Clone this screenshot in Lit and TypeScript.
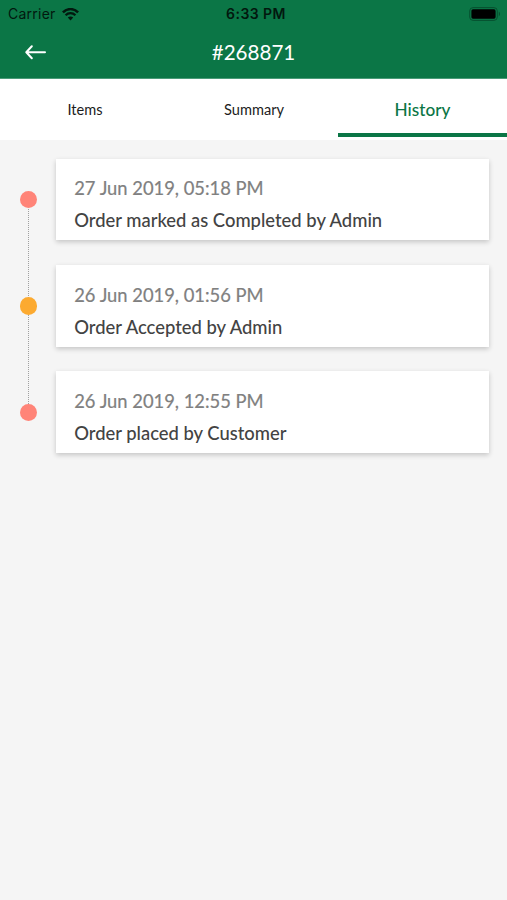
import { LitElement, html, css } from "lit";
import { customElement, property } from "lit/decorators.js";
import { classMap } from "lit/directives/class-map.js";

@customElement("status-bar")
class StatusBar extends LitElement {
  static styles = css`
    :host {
      display: grid;
      grid-template-columns: 1fr auto 1fr;
      align-items: center;
      height: 27px;
      padding: 0 6px 0 8px;
      color: #02180e;
      font-family: Inter, "Liberation Sans", sans-serif;
      font-size: 14px;
      line-height: 28px;
    }
    .left {
      display: flex;
      align-items: center;
      gap: 6px;
    }
    .carrier {
      letter-spacing: 0.25px;
    }
    .time {
      font-weight: 600;
      font-size: 14px;
      letter-spacing: 0.45px;
      padding-left: 3px;
    }
    .battery {
      justify-self: end;
    }
    svg {
      display: block;
    }
  `;
  render() {
    return html`
      <div class="left">
        <span class="carrier">Carrier</span>
        <svg width="17" height="13" viewBox="0 0 17 13" fill="none" stroke="currentColor">
          <path d="M0.9 4.4C5.2 0 11.8 0 16.1 4.4" stroke-width="2.5" />
          <path d="M3.6 7.2C6.4 4.4 10.6 4.4 13.4 7.2" stroke-width="2.3" />
          <path d="M8.5 12.4L5.8 9.5C7.3 8.1 9.7 8.1 11.2 9.5Z" fill="currentColor" stroke="none" />
        </svg>
      </div>
      <div class="time">6:33 PM</div>
      <svg class="battery" width="32" height="14" viewBox="0 0 32 14">
        <rect x="0.7" y="0.6" width="27.6" height="12.8" rx="3.4" fill="none" stroke="#06502f" stroke-width="1" />
        <rect x="2.4" y="2.3" width="24.2" height="9.4" rx="1.6" fill="#000" />
        <path d="M29.8 4.8C31.4 5.4 31.4 8.6 29.8 9.2Z" fill="#06502f" />
      </svg>
    `;
  }
}

@customElement("history-entry")
class HistoryEntry extends LitElement {
  @property() date = "";
  @property() text = "";
  @property() tone = "coral";
  @property({ type: Boolean }) last = false;

  static styles = css`
    :host {
      display: grid;
      grid-template-columns: 56px 1fr;
      height: 81.6px;
    }
    .rail {
      position: relative;
      display: flex;
      align-items: center;
      justify-content: center;
    }
    .dot {
      width: 17.4px;
      height: 17.4px;
      margin-left: 1px;
      border-radius: 50%;
      background: #ff8478;
    }
    .amber {
      background: #fcaa30;
    }
    .line {
      position: absolute;
      left: 28px;
      top: 50px;
      height: 89px;
      border-left: 1px dotted #a0a0a0;
    }
    .card {
      box-sizing: border-box;
      background: #fff;
      padding: 13.4px 18.2px 0;
      box-shadow: 0 2px 5px rgba(0, 0, 0, 0.2);
      font-family: Lato, sans-serif;
      font-size: 18.4px;
      line-height: 32px;
      white-space: nowrap;
    }
    .date {
      color: #808080;
      font-size: 18.35px;
      -webkit-text-stroke: 0.2px #808080;
    }
    .text {
      color: #434343;
      font-weight: 500;
    }
  `;
  render() {
    return html`
      <div class="rail">
        <div class=${classMap({ dot: true, amber: this.tone === "amber" })}></div>
        ${this.last ? null : html`<div class="line"></div>`}
      </div>
      <div class="card">
        <div class="date">${this.date}</div>
        <div class="text">${this.text}</div>
      </div>
    `;
  }
}

@customElement("app-root")
class AppRoot extends LitElement {
  static styles = css`
    :host {
      display: flex;
      flex-direction: column;
      height: 900px;
      background: #f5f5f5;
      font-family: Lato, sans-serif;
      overflow: hidden;
    }
    .header {
      box-sizing: border-box;
      height: 79px;
      background: #0b7646;
      border-bottom: 1px solid #4a9b78;
      flex: none;
    }
    .nav {
      display: grid;
      grid-template-columns: 56px 1fr 56px;
      align-items: center;
      height: 50px;
      color: #fff;
    }
    .back {
      display: block;
      margin-left: 25px;
    }
    .title {
      text-align: center;
      font-size: 20.6px;
      line-height: 50px;
    }
    .tabs {
      display: grid;
      grid-template-columns: repeat(3, 1fr);
      height: 61px;
      background: #fff;
      flex: none;
    }
    .tab {
      box-sizing: border-box;
      height: 57.5px;
      border-bottom: 4px solid transparent;
      padding-left: 1px;
      text-align: center;
      line-height: 61.5px;
      font-size: 14.6px;
      color: #1c1c1c;
    }
    .active {
      padding-left: 0;
      font-size: 17.2px;
      font-weight: 500;
      color: #0b7646;
      border-color: #0b7646;
    }
    .list {
      display: flex;
      flex-direction: column;
      gap: 24.7px;
      padding: 18.9px 18.4px 0 0;
    }
  `;

  private tabs = ["Items", "Summary", "History"];
  private entries = [
    { date: "27 Jun 2019, 05:18 PM", text: "Order marked as Completed by Admin", tone: "coral" },
    { date: "26 Jun 2019, 01:56 PM", text: "Order Accepted by Admin", tone: "amber" },
    { date: "26 Jun 2019, 12:55 PM", text: "Order placed by Customer", tone: "coral" },
  ];

  render() {
    return html`
      <div class="header">
        <status-bar></status-bar>
        <div class="nav">
          <svg class="back" width="21" height="16" viewBox="0 0 21 16" fill="none" stroke="currentColor"
            stroke-width="2" stroke-linecap="round" stroke-linejoin="round">
            <path d="M20 8.3H1.8M6.8 2.3L1.3 8.3L6.8 14.3" />
          </svg>
          <div class="title">#268871</div>
        </div>
      </div>
      <div class="tabs">
        ${this.tabs.map((t) => html`<div class=${classMap({ tab: true, active: t === "History" })}>${t}</div>`)}
      </div>
      <div class="list">
        ${this.entries.map(
          (e, i) => html`<history-entry .date=${e.date} .text=${e.text} .tone=${e.tone}
            .last=${i === this.entries.length - 1}></history-entry>`
        )}
      </div>
    `;
  }
}
